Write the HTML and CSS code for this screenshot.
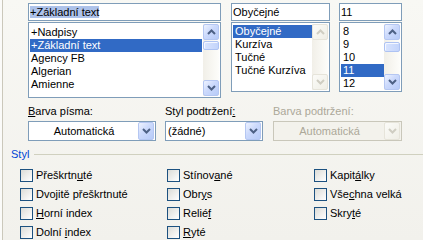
FILE: index.html
```html
<!DOCTYPE html>
<html lang="cs">
<head>
<meta charset="utf-8">
<title>Písmo</title>
<link rel="stylesheet" href="styles.css">
</head>
<body>
<div class="page">
  <div class="top">
    <div class="col col-font">
      <div class="field"><span class="sel">+Základní text</span></div>
      <div class="listbox lb-font">
        <ul class="items">
          <li>+Nadpisy</li>
          <li class="on">+Základní text</li>
          <li>Agency FB</li>
          <li>Algerian</li>
          <li>Amienne</li>
        </ul>
        <div class="sb">
          <div class="sbtn"><svg width="9" height="6" viewBox="0 0 9 6"><polyline points="1,5 4.5,1.5 8,5" fill="none" stroke="#4d6185" stroke-width="2"/></svg></div>
          <div class="track"><div class="thumb" style="margin-top:1px;height:9px"></div></div>
          <div class="sbtn"><svg width="9" height="6" viewBox="0 0 9 6"><polyline points="1,1 4.5,4.5 8,1" fill="none" stroke="#4d6185" stroke-width="2"/></svg></div>
        </div>
      </div>
    </div>
    <div class="col col-style">
      <div class="field">Obyčejné</div>
      <div class="listbox lb-short">
        <ul class="items wide">
          <li class="on">Obyčejné</li>
          <li>Kurzíva</li>
          <li>Tučné</li>
          <li>Tučné Kurzíva</li>
        </ul>
        <div class="sb off">
          <div class="sbtn"><svg width="9" height="6" viewBox="0 0 9 6"><polyline points="1,5 4.5,1.5 8,5" fill="none" stroke="#cfcdc2" stroke-width="2"/></svg></div>
          <div class="track"></div>
          <div class="sbtn"><svg width="9" height="6" viewBox="0 0 9 6"><polyline points="1,1 4.5,4.5 8,1" fill="none" stroke="#cfcdc2" stroke-width="2"/></svg></div>
        </div>
      </div>
    </div>
    <div class="col col-size">
      <div class="field">11</div>
      <div class="listbox lb-short">
        <ul class="items wide">
          <li>8</li>
          <li>9</li>
          <li>10</li>
          <li class="on">11</li>
          <li>12</li>
        </ul>
        <div class="sb">
          <div class="sbtn"><svg width="9" height="6" viewBox="0 0 9 6"><polyline points="1,5 4.5,1.5 8,5" fill="none" stroke="#4d6185" stroke-width="2"/></svg></div>
          <div class="track"><div class="thumb" style="margin-top:2px;height:10px"></div></div>
          <div class="sbtn"><svg width="9" height="6" viewBox="0 0 9 6"><polyline points="1,1 4.5,4.5 8,1" fill="none" stroke="#4d6185" stroke-width="2"/></svg></div>
        </div>
      </div>
    </div>
  </div>

  <div class="opts">
    <div class="opt opt1">
      <div class="lbl"><u>B</u>arva písma:</div>
      <div class="combo center"><span class="val">Automatická</span><span class="dbtn"><svg width="9" height="6" viewBox="0 0 9 6"><polyline points="1,1 4.5,4.5 8,1" fill="none" stroke="#4d6185" stroke-width="2"/></svg></span></div>
    </div>
    <div class="opt opt2">
      <div class="lbl">Styl podtržení<u>:</u></div>
      <div class="combo"><span class="val">(žádné)</span><span class="dbtn"><svg width="9" height="6" viewBox="0 0 9 6"><polyline points="1,1 4.5,4.5 8,1" fill="none" stroke="#4d6185" stroke-width="2"/></svg></span></div>
    </div>
    <div class="opt opt3">
      <div class="lbl dis">Barva podtržení:</div>
      <div class="combo center off"><span class="val">Automatická</span><span class="dbtn"><svg width="9" height="6" viewBox="0 0 9 6"><polyline points="1,1 4.5,4.5 8,1" fill="none" stroke="#cfcdc2" stroke-width="2"/></svg></span></div>
    </div>
  </div>

  <div class="grp"><span class="grp-title">Styl</span><span class="grp-line"></span></div>

  <div class="checks">
    <div class="chk"><span class="box"></span><span>Přeškrtn<u>u</u>té</span></div>
    <div class="chk"><span class="box"></span><span>Stínov<u>a</u>né</span></div>
    <div class="chk"><span class="box"></span><span>Kapit<u>á</u>lky</span></div>
    <div class="chk"><span class="box"></span><span>Dvo<u>j</u>itě přeškrtnuté</span></div>
    <div class="chk"><span class="box"></span><span>Obr<u>y</u>s</span></div>
    <div class="chk"><span class="box"></span><span>Vše<u>c</u>hna velká</span></div>
    <div class="chk"><span class="box"></span><span><u>H</u>orní index</span></div>
    <div class="chk"><span class="box"></span><span>Relié<u>f</u></span></div>
    <div class="chk"><span class="box"></span><span>Skry<u>t</u>é</span></div>
    <div class="chk"><span class="box"></span><span>Dolní <u>i</u>ndex</span></div>
    <div class="chk"><span class="box"></span><span><u>R</u>yté</span></div>
  </div>
</div>
</body>
</html>
```

FILE: styles.css
```css
* { box-sizing: border-box; }
html, body { margin: 0; padding: 0; }
body {
  width: 423px;
  height: 240px;
  overflow: hidden;
  background: #fbfbf9;
  font-family: "Liberation Sans", Arial, sans-serif;
  font-size: 11px;
  line-height: 13px;
  color: #000;
}
u { text-decoration: underline; text-underline-offset: 1px; }

.page {
  margin-left: 2px;
  border-left: 1px solid #cbc8bb;
  height: 240px;
  background: linear-gradient(to bottom, #f8f8f4, #f2f1ec);
}

/* top lists */
.top { display: flex; align-items: flex-start; padding: 3px 0 0 25px; }
.col-font { width: 193px; }
.col-style { width: 99px; margin-left: 10px; }
.col-size { width: 63px; margin-left: 9px; }

.field {
  height: 18px;
  border: 1px solid #7f9db9;
  background: #fff;
  padding: 2px 2px 0 1px;
  margin-bottom: 1px;
  white-space: nowrap;
  overflow: hidden;
}
.sel { background: #adc2ea; }

.listbox {
  display: flex;
  border: 1px solid #7f9db9;
  background: #fff;
  overflow: hidden;
}
.lb-font { height: 76px; }
.lb-short { height: 70px; }

.items {
  flex: 1;
  min-width: 0;
  list-style: none;
  margin: 0;
  padding: 3px 1px 0 1px;
  overflow: hidden;
}
.items.wide { padding: 2px 0 0 1px; }
.items li { height: 13px; padding-left: 1px; white-space: nowrap; }
.items.wide li { padding-left: 2px; }
.items li.on { background: #316ac5; color: #fff; }

/* scrollbar */
.sb {
  width: 16px;
  flex: none;
  margin: 1px 1px 1px 0;
  display: flex;
  flex-direction: column;
  background: linear-gradient(to right, #f1efe8, #fdfdfa);
}
.sbtn {
  flex: none;
  height: 16px;
  border: 1px solid #b5c7f2;
  border-radius: 2px;
  background: linear-gradient(135deg, #eef3ff 0%, #cbd9fc 45%, #b7cbf8 100%);
  display: flex;
  align-items: center;
  justify-content: center;
}
.track { flex: 1; }
.thumb {
  border: 1px solid #aec3f3;
  border-radius: 2px;
  background: linear-gradient(to right, #d9e4fe, #c3d4fb);
  box-shadow: inset 1px 1px 0 #f4f7ff;
}
.sb.off .sbtn {
  border-color: #e6e4da;
  background: linear-gradient(135deg, #fbfbf8, #efeee6);
}

/* combos */
.opts { display: flex; padding-left: 25px; margin-top: 7px; }
.opt1 { width: 128px; }
.opt2 { width: 98px; margin-left: 9px; }
.opt3 { width: 129px; margin-left: 10px; }
.lbl { height: 13px; margin-bottom: 3px; white-space: nowrap; }
.lbl.dis { color: #aca899; }

.combo {
  height: 20px;
  border: 1px solid #7f9db9;
  background: #fff;
  display: flex;
  align-items: center;
  padding: 1px;
}
.combo .val { flex: 1; padding-left: 1px; white-space: nowrap; overflow: hidden; }
.combo.center .val { text-align: center; padding-left: 0; }
.dbtn {
  flex: none;
  width: 16px;
  height: 18px;
  border: 1px solid #b5c7f2;
  border-radius: 2px;
  background: linear-gradient(135deg, #eef3ff 0%, #cbd9fc 45%, #b7cbf8 100%);
  display: flex;
  align-items: center;
  justify-content: center;
}
.combo.off { border-color: #c9c7ba; background: #f3f2ec; color: #aca899; }
.combo.off .dbtn { border-color: #e6e4da; background: linear-gradient(135deg, #fbfbf8, #efeee6); }

/* group */
.grp { display: flex; align-items: center; height: 13px; margin-top: 7px; padding-left: 8px; }
.grp-title { color: #0046d5; }
.grp-line { flex: 1; height: 1px; background: #d0d0bf; margin-left: 5px; }

.checks {
  display: grid;
  grid-template-columns: 147px 147px auto;
  row-gap: 6px;
  padding-left: 17px;
  margin-top: 8px;
}
.chk { display: flex; align-items: center; height: 13px; white-space: nowrap; }
.box {
  flex: none;
  width: 13px;
  height: 13px;
  margin-right: 3px;
  border: 1px solid #1c5180;
  background: linear-gradient(135deg, #dcdcd7, #ffffff);
}
```
